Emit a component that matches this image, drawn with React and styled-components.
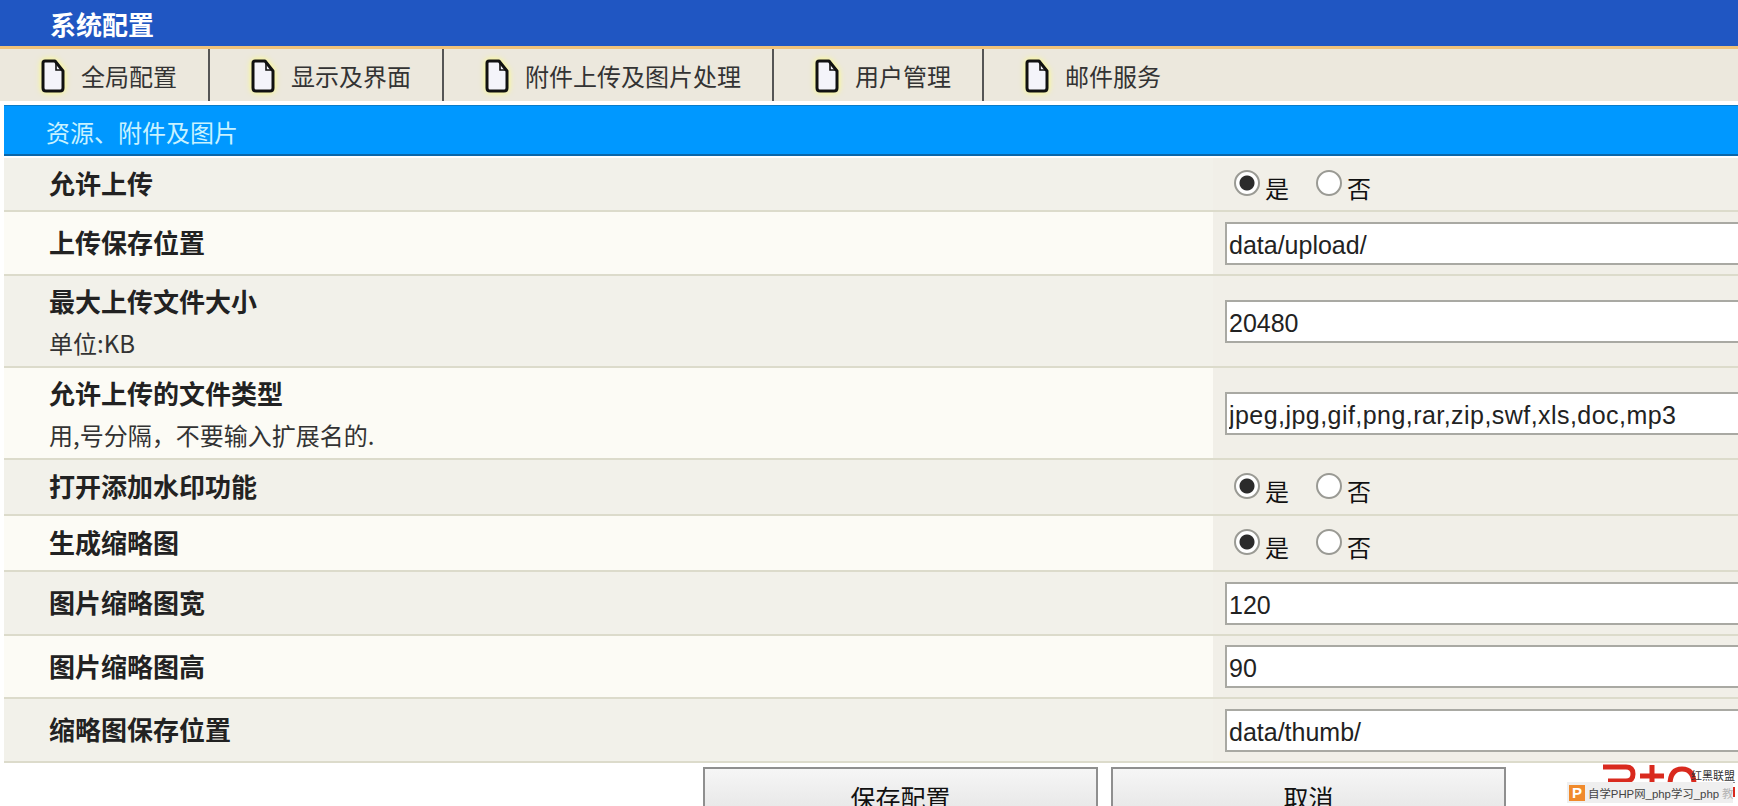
import React from 'react'
import styled, { createGlobalStyle } from 'styled-components'

const GlobalStyle = createGlobalStyle`
  html, body { margin: 0; padding: 0; background: #fff; overflow: hidden; }
  body { font-family: "Noto Sans CJK SC", "Liberation Sans", sans-serif; color: #222; }
`

const Page = styled.div`
  width: 1738px;
  height: 806px;
  overflow: hidden;
`

const TitleBar = styled.div`
  height: 46px;
  padding-left: 50px;
  display: flex;
  align-items: center;
  background: #2056c2;
  border-bottom: 3px solid #f0c27a;
  color: #fff;
  font-size: 26px;
  font-weight: 700;
`

const Tabs = styled.div`
  display: flex;
  height: 52px;
  background: #ece8dd;
  border-bottom: 4px solid #fff;
`

const Tab = styled.div`
  display: flex;
  align-items: center;
  gap: 15px;
  padding: 0 31px 0 40px;
  border-right: 2px solid ${p => (p.$last ? 'transparent' : '#555')};
  font-size: 24px;
  color: #333;
`

const DocSvg = styled.svg`
  width: 26px;
  height: 36px;
  margin-top: 2px;
  filter: drop-shadow(0 0 3px #ffff70);
`

const SectionHead = styled.div`
  margin-left: 4px;
  height: 51px;
  padding: 2px 0 0 42px;
  display: flex;
  align-items: center;
  background: #0098ff;
  border-top: 1px solid #0a7cc8;
  border-bottom: 2px solid #0b66a8;
  box-sizing: border-box;
  color: #c8f2ff;
  font-size: 24px;
`

const Rows = styled.div`
  margin: 2px 0 0 4px;
`

const Row = styled.div`
  display: flex;
  height: ${p => p.$h}px;
  box-sizing: border-box;
  background: ${p => (p.$alt ? '#fcfbf5' : '#f2f1ea')};
  border-bottom: 2px solid #dcdbcb;
`

const LabelCell = styled.div`
  flex: 1;
  padding: 0 0 2px 45px;
  display: flex;
  flex-direction: column;
  justify-content: center;
`

const Label = styled.div`
  font-size: 26px;
  font-weight: 700;
  line-height: 38px;
  color: #222;
`

const Hint = styled.div`
  margin-top: 7px;
  font-size: 24px;
  line-height: 32px;
  color: #333;
`

const ValueCell = styled.div`
  width: 525px;
  padding-left: 12px;
  box-sizing: border-box;
  display: flex;
  align-items: center;
  background: #f1efe8;
`

const TextInput = styled.input`
  flex: none;
  width: 700px;
  height: 43px;
  padding: 4px 2px 0;
  box-sizing: border-box;
  border: 2px solid #a9a9a3;
  border-right: none;
  background: #fff;
  outline: none;
  font-family: "Liberation Sans", Arial, sans-serif;
  font-size: 25px;
  letter-spacing: ${p => (p.$wide ? '0.45px' : '0')};
  color: #222;
`

const RadioGroup = styled.div`
  display: flex;
  align-items: flex-start;
  padding: 5px 0 0 9px;
  height: ${p => (p.$clip ? '33px' : 'auto')};
  overflow: hidden;
`

const RadioItem = styled.div`
  display: flex;
  margin-right: 27px;
  padding-top: 2px;
  font-size: 24px;
  line-height: 32px;
  color: #111;
`

const RadioDot = styled.span`
  width: 26px;
  height: 26px;
  margin: -2px 5px 0 0;
  box-sizing: border-box;
  border: 2px solid #9a9a94;
  border-radius: 50%;
  background: ${p => (p.$on ? 'radial-gradient(circle, #2b2b2b 0 7px, #fff 8px)' : '#fff')};
`

const Footer = styled.div`
  position: relative;
  height: 43px;
  overflow: hidden;
  background: #fff;
`

const Buttons = styled.div`
  display: flex;
  gap: 13px;
  padding: 4px 0 0 703px;
`

const Button = styled.div`
  width: 395px;
  height: 60px;
  box-sizing: border-box;
  padding-top: 11px;
  border: 2px solid #8f8f8f;
  background: linear-gradient(#f6f6f6, #e2e2e2);
  text-align: center;
  font-size: 25px;
  line-height: 34px;
  color: #111;
`

const LogoMark = styled.svg`
  position: absolute;
  left: 1600px;
  top: 0;
  width: 138px;
  height: 43px;
`

const LogoText = styled.div`
  position: absolute;
  left: 1691px;
  top: 5px;
  font-size: 11px;
  line-height: 14px;
  color: #333;
  border-bottom: 1px solid #888;
`

const Watermark = styled.div`
  position: absolute;
  left: 1567px;
  top: 19px;
  width: 166px;
  height: 21px;
  display: flex;
  align-items: center;
  gap: 3px;
  padding-left: 2px;
  box-sizing: border-box;
  overflow: hidden;
  background: #efefef;
  font-family: "Liberation Sans", "Noto Sans CJK SC", sans-serif;
  font-size: 11.4px;
  white-space: nowrap;
  color: #444;
`

const WatermarkIcon = styled.span`
  flex: none;
  width: 16px;
  height: 16px;
  background: #f08a2c;
  color: #fff;
  font-size: 15px;
  font-weight: 700;
  line-height: 16px;
  text-align: center;
`

const Fade = styled.span`
  color: #b5b5b5;
`

const DocIcon = () => (
  <DocSvg viewBox="0 0 26 36">
    <path d="M5 3H15L23 13V30Q23 33 20 33H6Q3 33 3 30V5Q3 3 5 3Z" fill="#f4f4fa" stroke="#111" strokeWidth="3" strokeLinejoin="round" />
    <path d="M16 4V12H22" fill="none" stroke="#111" strokeWidth="1.6" />
  </DocSvg>
)

const tabs = ['全局配置', '显示及界面', '附件上传及图片处理', '用户管理', '邮件服务']

const Radios = ({ clip }) => (
  <RadioGroup $clip={clip}>
    <RadioItem><RadioDot $on />是</RadioItem>
    <RadioItem><RadioDot />否</RadioItem>
  </RadioGroup>
)

const rows = [
  { h: 54, label: '允许上传', radio: true },
  { h: 64, label: '上传保存位置', value: 'data/upload/', alt: true },
  { h: 92, label: '最大上传文件大小', hint: '单位:KB', value: '20480' },
  { h: 92, label: '允许上传的文件类型', hint: '用,号分隔，不要输入扩展名的.', value: 'jpeg,jpg,gif,png,rar,zip,swf,xls,doc,mp3', wide: true, alt: true },
  { h: 56, label: '打开添加水印功能', radio: true },
  { h: 56, label: '生成缩略图', radio: true, clip: true, alt: true },
  { h: 64, label: '图片缩略图宽', value: '120' },
  { h: 63, label: '图片缩略图高', value: '90', alt: true },
  { h: 64, label: '缩略图保存位置', value: 'data/thumb/' },
]

export default function App() {
  return (
    <Page>
      <GlobalStyle />
      <TitleBar>系统配置</TitleBar>
      <Tabs>
        {tabs.map((t, i) => (
          <Tab key={t} $last={i === tabs.length - 1}>
            <DocIcon />
            {t}
          </Tab>
        ))}
      </Tabs>
      <SectionHead>资源、附件及图片</SectionHead>
      <Rows>
        {rows.map(r => (
          <Row key={r.label} $h={r.h} $alt={r.alt}>
            <LabelCell>
              <Label>{r.label}</Label>
              {r.hint && <Hint>{r.hint}</Hint>}
            </LabelCell>
            <ValueCell>
              {r.radio ? <Radios clip={r.clip} /> : <TextInput readOnly value={r.value} $wide={r.wide} />}
            </ValueCell>
          </Row>
        ))}
      </Rows>
      <Footer>
        <Buttons>
          <Button>保存配置</Button>
          <Button>取消</Button>
        </Buttons>
        <LogoMark viewBox="0 0 138 43">
          <g fill="none" stroke="#d92a1e" strokeWidth="5">
            <path d="M3 4H26Q33 4 33 11T26 18H8" />
            <path d="M52 2V24M40 13H64" />
            <path d="M70 22Q70 6 82 6T94 22" />
          </g>
          <path d="M134 24V34" stroke="#d92a1e" strokeWidth="2" />
        </LogoMark>
        <LogoText>红黑联盟</LogoText>
        <Watermark>
          <WatermarkIcon>P</WatermarkIcon>
          自学PHP网_php学习_php<Fade>教</Fade>
        </Watermark>
      </Footer>
    </Page>
  )
}
